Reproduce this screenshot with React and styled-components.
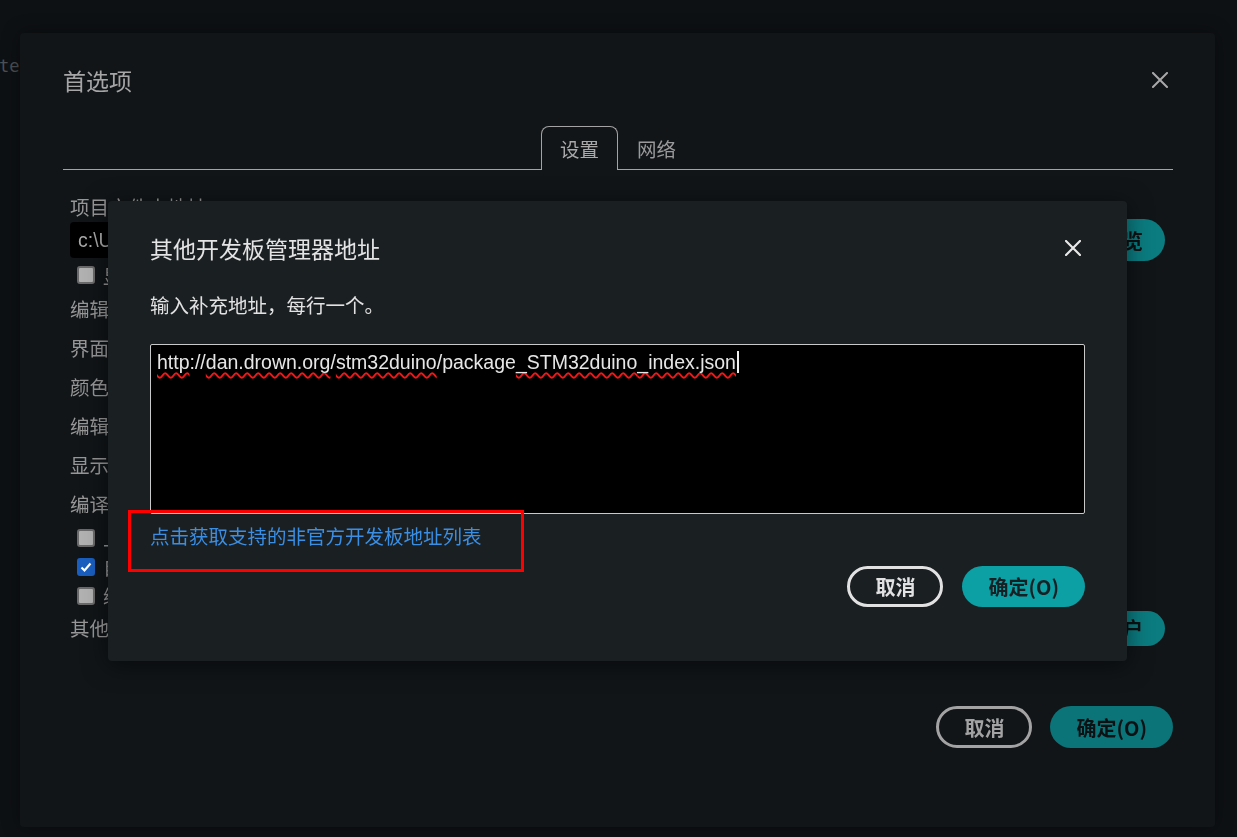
import React from 'react';
import styled, { createGlobalStyle } from 'styled-components';

const GlobalStyle = createGlobalStyle`
  html, body {
    margin: 0;
    padding: 0;
    height: 100%;
    overflow: hidden;
    background: #0e1114;
  }
  body {
    font-family: "Noto Sans CJK SC", "Noto Sans", sans-serif;
  }
`;

const Page = styled.div`
  min-height: 100vh;
  background: #0e1114;
`;

const CodeLine = styled.div`
  padding-top: 56px;
  margin-left: -1px;
  font-family: "DejaVu Sans Mono", "Liberation Mono", monospace;
  font-size: 17px;
  color: #4c5054;
  white-space: nowrap;
`;

const PrefDialog = styled.div`
  position: fixed;
  left: 20px;
  top: 33px;
  width: 1195px;
  height: 794px;
  box-sizing: border-box;
  padding: 30px 42px 79px 43px;
  display: flex;
  flex-direction: column;
  background: #111518;
  border-radius: 4px;
  box-shadow: 0 0 18px rgba(0, 0, 0, 0.45);
`;

const Header = styled.div`
  display: flex;
  justify-content: space-between;
  align-items: center;
  height: 34px;
`;

const Title = styled.h2`
  margin: 0;
  font-size: 23px;
  font-weight: 400;
  line-height: 34px;
  color: ${(p) => p.$color};
`;

const CloseButton = styled.button`
  width: ${(p) => p.$size}px;
  height: 24px;
  padding: 0;
  border: 0;
  background: none;
  display: flex;
  align-items: center;
  justify-content: center;
  color: ${(p) => p.$color};
  cursor: pointer;
`;

const TabBar = styled.div`
  margin-top: 29px;
  display: flex;
  justify-content: center;
  border-bottom: 1px solid #a3a3a3;
`;

const Tab = styled.div`
  width: 77px;
  height: ${(p) => (p.$active ? 44 : 43)}px;
  box-sizing: border-box;
  margin-bottom: ${(p) => (p.$active ? -1 : 0)}px;
  display: flex;
  align-items: center;
  justify-content: center;
  padding-top: ${(p) => (p.$active ? 0 : 1)}px;
  font-size: 19.5px;
  color: ${(p) => (p.$active ? '#a9a9a9' : '#9a9a9a')};
  background: ${(p) => (p.$active ? '#111518' : 'transparent')};
  border: 1px solid ${(p) => (p.$active ? '#a3a3a3' : 'transparent')};
  border-bottom: none;
  border-radius: 8px 8px 0 0;
`;

const Settings = styled.div`
  margin-top: 24px;
  padding: 0 8px 0 7px;
  display: flex;
  flex-direction: column;
`;

const FieldLabel = styled.div`
  height: ${(p) => p.$h || 39}px;
  line-height: ${(p) => p.$h || 39}px;
  font-size: 19.5px;
  color: #979797;
  white-space: nowrap;
`;

const InputRow = styled.div`
  display: flex;
  align-items: center;
  justify-content: space-between;
  gap: 12px;
  height: ${(p) => p.$h}px;
`;

const PathInput = styled.div`
  flex: 1;
  height: 36px;
  box-sizing: border-box;
  padding: 0 8px;
  display: flex;
  align-items: center;
  background: #000;
  border-radius: 4px;
  font-family: "Liberation Sans", Arial, sans-serif;
  font-size: 19.5px;
  color: #a8a8a8;
`;

const Pill = styled.button`
  height: ${(p) => p.$h}px;
  padding: 0 22px;
  border: 0;
  border-radius: 21px;
  background: #0b7c80;
  color: #0d1113;
  font-family: "Noto Sans CJK SC", sans-serif;
  font-size: 20px;
  font-weight: 700;
`;

const CheckRow = styled.label`
  height: ${(p) => p.$h}px;
  display: flex;
  align-items: center;
  gap: 8px;
  padding-left: 7px;
  font-size: 19.5px;
  color: #979797;
  white-space: nowrap;
`;

const Box = styled.span`
  width: 18px;
  height: 18px;
  box-sizing: border-box;
  border-radius: 3px;
  display: flex;
  align-items: center;
  justify-content: center;
  background: ${(p) => (p.$checked ? '#1a5fbf' : '#b2b2b2')};
  border: 2px solid ${(p) => (p.$checked ? '#1a5fbf' : '#6a6a6a')};
`;

const Footer = styled.div`
  margin-top: auto;
  display: flex;
  justify-content: flex-end;
  gap: 18px;
`;

const OutlineButton = styled.button`
  height: ${(p) => p.$h}px;
  padding: 0 25px;
  box-sizing: border-box;
  border: 3px solid ${(p) => p.$color};
  border-radius: 21px;
  background: transparent;
  color: ${(p) => p.$color};
  font-family: "Noto Sans CJK SC", sans-serif;
  font-size: 20px;
  font-weight: 700;
`;

const FilledButton = styled.button`
  height: ${(p) => p.$h}px;
  padding: 0 26px;
  border: 0;
  border-radius: 21px;
  background: ${(p) => p.$bg};
  color: ${(p) => p.$fg};
  font-family: "Noto Sans CJK SC", sans-serif;
  font-size: 20px;
  font-weight: 700;
`;

const Dialog = styled.div`
  position: fixed;
  left: 108px;
  top: 201px;
  width: 1019px;
  height: 460px;
  box-sizing: border-box;
  padding: 30px 42px 54px;
  display: flex;
  flex-direction: column;
  background: #1a1f22;
  border-radius: 4px;
  box-shadow: 0 4px 24px rgba(0, 0, 0, 0.5);
`;

const Subtitle = styled.p`
  margin: 26px 0 0;
  font-size: 19.5px;
  line-height: 28px;
  color: #e2e2e2;
`;

const UrlBox = styled.div`
  margin-top: 25px;
  height: 171px;
  box-sizing: border-box;
  padding: 6px 6px;
  background: #000;
  border: 1px solid #c9c9c9;
  border-radius: 2px;
  font-family: "Liberation Sans", Arial, sans-serif;
  font-size: 19.5px;
  line-height: 1.2;
  color: #e6e6e6;
  white-space: nowrap;
`;

const Misspelled = styled.span`
  text-decoration: underline wavy #f01818;
  text-decoration-thickness: 1.5px;
  text-decoration-skip-ink: none;
  text-underline-offset: 3px;
`;

const Caret = styled.span`
  display: inline-block;
  width: 2px;
  height: 22px;
  margin-left: 1px;
  vertical-align: -4px;
  background: #f0f0f0;
`;

const LinkRow = styled.div`
  position: relative;
  margin-top: 8px;
  line-height: 28px;
`;

const Link = styled.a`
  font-size: 19.5px;
  color: #3a8ee4;
  text-decoration: none;
  cursor: pointer;
`;

const Highlight = styled.div`
  position: absolute;
  left: -22px;
  top: -12px;
  width: 396px;
  height: 62px;
  box-sizing: border-box;
  border: 3px solid #ff0000;
  pointer-events: none;
`;

const ButtonRow = styled.div`
  margin-top: 15px;
  display: flex;
  justify-content: flex-end;
  gap: 19px;
`;

const XIcon = ({ width = 2 }) => (
  <svg width="16" height="16" viewBox="0 0 16 16">
    <path d="M1 1 L15 15 M15 1 L1 15" stroke="currentColor" strokeWidth={width} strokeLinecap="square" />
  </svg>
);

const Check = () => (
  <svg width="12" height="12" viewBox="0 0 12 12">
    <path d="M1.5 6.5 L4.5 9.5 L10.5 2.5" fill="none" stroke="#fff" strokeWidth="2.2" />
  </svg>
);

export default function App() {
  return (
    <Page>
      <GlobalStyle />
      <CodeLine>text</CodeLine>

      <PrefDialog>
        <Header>
          <Title $color="#a6a6a6">首选项</Title>
          <CloseButton $size={26} $color="#a8a8a8" aria-label="关闭">
            <XIcon />
          </CloseButton>
        </Header>

        <TabBar>
          <Tab $active>设置</Tab>
          <Tab>网络</Tab>
        </TabBar>

        <Settings>
          <FieldLabel $h={25}>项目文件夹地址</FieldLabel>
          <InputRow $h={42}>
            <PathInput>c:\Users\Documents\Arduino</PathInput>
            <Pill $h={42}>浏览</Pill>
          </InputRow>
          <CheckRow $h={28}>
            <Box />
            显示文件
          </CheckRow>
          <FieldLabel>编辑器字体大小</FieldLabel>
          <FieldLabel>界面缩放</FieldLabel>
          <FieldLabel>颜色主题</FieldLabel>
          <FieldLabel>编辑器语言</FieldLabel>
          <FieldLabel>显示详细输出</FieldLabel>
          <FieldLabel>编译器警告</FieldLabel>
          <CheckRow $h={29}>
            <Box />
            上传后验证代码
          </CheckRow>
          <CheckRow $h={29}>
            <Box $checked>
              <Check />
            </Box>
            自动保存
          </CheckRow>
          <CheckRow $h={29}>
            <Box />
            编辑器快速建议
          </CheckRow>
          <InputRow $h={36}>
            <FieldLabel $h={36}>其他开发板管理器地址</FieldLabel>
            <Pill $h={35}>用户</Pill>
          </InputRow>
        </Settings>

        <Footer>
          <OutlineButton $h={42} $color="#a3a3a3">取消</OutlineButton>
          <FilledButton $h={42} $bg="#0a7478" $fg="#0d1113">确定(O)</FilledButton>
        </Footer>
      </PrefDialog>

      <Dialog role="dialog">
        <Header>
          <Title $color="#e4e4e4">其他开发板管理器地址</Title>
          <CloseButton $size={24} $color="#e8e8e8" aria-label="关闭">
            <XIcon width={2.2} />
          </CloseButton>
        </Header>
        <Subtitle>输入补充地址，每行一个。</Subtitle>
        <UrlBox role="textbox">
          <Misspelled>http</Misspelled>://<Misspelled>dan.drown.org</Misspelled>/
          <Misspelled>stm32duino</Misspelled>/package<Misspelled>_STM32duino</Misspelled>
          <Misspelled>_index.json</Misspelled>
          <Caret />
        </UrlBox>
        <LinkRow>
          <Link>点击获取支持的非官方开发板地址列表</Link>
          <Highlight />
        </LinkRow>
        <ButtonRow>
          <OutlineButton $h={41} $color="#e2e2e2">取消</OutlineButton>
          <FilledButton $h={41} $bg="#0c9fa4" $fg="#182024">确定(O)</FilledButton>
        </ButtonRow>
      </Dialog>
    </Page>
  );
}
